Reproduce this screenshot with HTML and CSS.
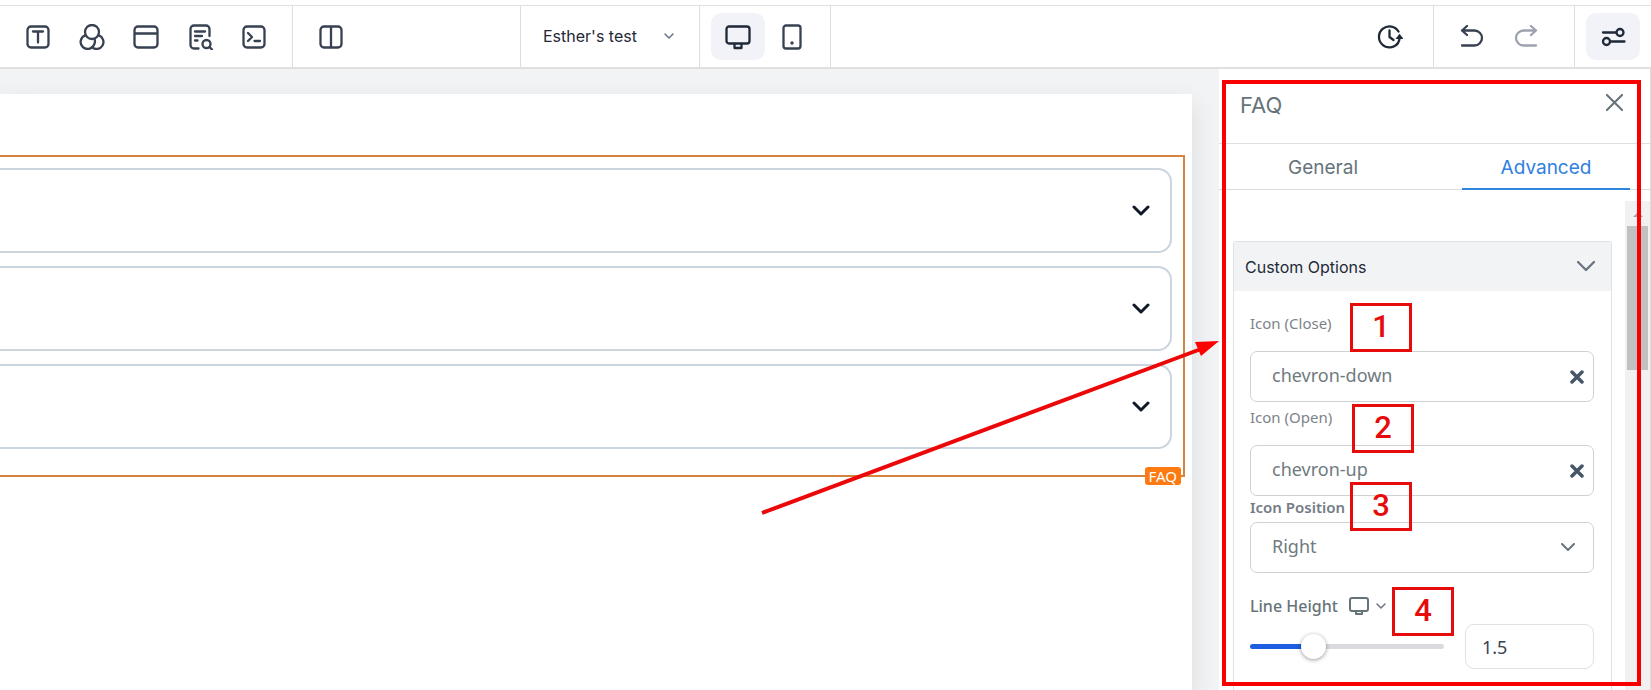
FILE: index.html
```html
<!DOCTYPE html>
<html lang="en">
<head>
    <meta charset="UTF-8">
    <meta name="viewport" content="width=device-width, initial-scale=1.0">
    <title>Page Editor - FAQ</title>
    <link rel="stylesheet" href="styles.css">
</head>
<body>
    <div class="app">
        <header class="toolbar">
            <div class="tool-group">
                <button type="button" class="tool-btn" aria-label="Text">
                    <svg class="icon" viewBox="0 0 24 24"><rect x="1.5" y="1.5" width="21" height="21" rx="3.5"/><path d="M7 6.5h10M12 6.5v11"/></svg>
                </button>
                <button type="button" class="tool-btn" aria-label="Elements">
                    <svg class="icon icon-wide" viewBox="0 0 26 26"><circle cx="13" cy="8" r="7"/><path d="M6.200 11.400a7 7 0 1 0 9 9q1.300-2.500.3-5.500"/><path d="M19.800 11.400a7 7 0 1 1-6.800 12"/></svg>
                </button>
                <button type="button" class="tool-btn" aria-label="Sections">
                    <svg class="icon icon-wide" viewBox="0 0 26 26"><rect x="1.500" y="2.500" width="23" height="21" rx="3.500"/><path d="M2 9.500h22"/></svg>
                </button>
                <button type="button" class="tool-btn" aria-label="Page content">
                    <svg class="icon icon-wide" viewBox="0 0 26 26"><path d="M11.500 24.500H7A3.500 3.500 0 0 1 3.500 21V5A3.500 3.500 0 0 1 7 1.500h12A3.500 3.500 0 0 1 22.500 5v7M8 7.500h10M8 12h7M8 16.500h2.500"/><circle cx="19.500" cy="20" r="4"/><path d="M22.500 23l2.500 2.500"/></svg>
                </button>
                <button type="button" class="tool-btn" aria-label="Code">
                    <svg class="icon" viewBox="0 0 24 24"><rect x="1.500" y="1.500" width="21" height="21" rx="3.500"/><path d="M6 8l4 4-4 4M12.500 16h5.500"/></svg>
                </button>
            </div>
            <div class="tool-group tool-group-layout">
                <button type="button" class="tool-btn" aria-label="Columns">
                    <svg class="icon" viewBox="0 0 24 24"><rect x="1.500" y="1.500" width="21" height="21" rx="3.500"/><path d="M12 2v20"/></svg>
                </button>
            </div>
            <div class="tool-group tool-group-page">
                <button type="button" class="page-btn">
                    <span>Esther's test</span>
                    <svg class="icon-caret" viewBox="0 0 10 6"><path d="M1 1l4 4 4-4"/></svg>
                </button>
            </div>
            <div class="tool-group">
                <button type="button" class="tool-btn active" aria-label="Desktop view">
                    <svg class="icon icon-wide" viewBox="0 0 26 26"><rect x="1.500" y="2.500" width="23" height="17" rx="2.500"/><path d="M9.500 20v4h7v-4"/></svg>
                </button>
                <button type="button" class="tool-btn" aria-label="Mobile view">
                    <svg class="icon icon-wide" viewBox="0 0 26 26"><rect x="4.500" y="1.500" width="17" height="23" rx="2.500"/><circle class="dot" cx="13" cy="19" r="1.700"/></svg>
                </button>
            </div>
            <div class="tool-group tool-group-history">
                <button type="button" class="tool-btn dark" aria-label="Version history">
                    <svg class="icon icon-wide" viewBox="0 0 26 26"><path d="M21 19A10.500 10.500 0 1 1 21.500 7.500M12.500 6.500v6.500l4 3"/><path d="M21 19q1.500-2.500 1.600-5"/><path class="dot" d="M18.500 15l4-5.200 4 5.200z"/></svg>
                </button>
            </div>
            <div class="tool-group tool-group-undo">
                <button type="button" class="tool-btn" aria-label="Undo">
                    <svg class="icon" viewBox="0 0 24 24"><path d="M7 1L2 5.500 7 10M2 5.500H14.500a7.500 7.500 0 0 1 0 15H2"/></svg>
                </button>
                <button type="button" class="tool-btn" aria-label="Redo" disabled>
                    <svg class="icon" viewBox="0 0 24 24"><path d="M17 1L22 5.500 17 10M22 5.500H9.500a7.500 7.500 0 0 0 0 15H22"/></svg>
                </button>
            </div>
            <div class="tool-group tool-group-last">
                <button type="button" class="tool-btn active" aria-label="Settings">
                    <svg class="icon icon-wide" viewBox="0 0 26 26"><circle cx="20" cy="8.500" r="3.500"/><path d="M3 8.500h13"/><circle cx="6.500" cy="17.500" r="3.500"/><path d="M10.500 17.500h14"/></svg>
                </button>
            </div>
        </header>

        <div class="workspace">
            <main class="canvas">
                <div class="page">
                    <section class="faq">
                        <div class="faq-item">
                            <svg class="faq-chevron" viewBox="0 0 18 11"><path d="M2 2l7 7 7-7"/></svg>
                        </div>
                        <div class="faq-item">
                            <svg class="faq-chevron" viewBox="0 0 18 11"><path d="M2 2l7 7 7-7"/></svg>
                        </div>
                        <div class="faq-item">
                            <svg class="faq-chevron" viewBox="0 0 18 11"><path d="M2 2l7 7 7-7"/></svg>
                        </div>
                        <span class="faq-tag">FAQ</span>
                    </section>
                </div>
            </main>

            <aside class="panel">
                <div class="panel-header">
                    <h2>FAQ</h2>
                    <button type="button" class="close-btn" aria-label="Close">
                        <svg viewBox="0 0 18 18"><path d="M1 1l16 16M17 1L1 17"/></svg>
                    </button>
                </div>
                <div class="tabs">
                    <button type="button" class="tab">General</button>
                    <button type="button" class="tab active">Advanced</button>
                </div>
                <div class="panel-body">
                    <div class="options">
                        <button type="button" class="options-header">
                            <span>Custom Options</span>
                            <svg class="options-chevron" viewBox="0 0 18 11"><path d="M1 1l8 8 8-8"/></svg>
                        </button>
                        <form class="options-content">
                            <label class="label-light label-first" for="icon-close">Icon (Close)</label>
                            <div class="field">
                                <input type="text" id="icon-close" value="chevron-down">
                                <button type="button" class="clear-btn" aria-label="Clear close icon">
                                    <svg viewBox="0 0 14 14"><path d="M2 2l10 10M12 2L2 12"/></svg>
                                </button>
                            </div>
                            <label class="label-light" for="icon-open">Icon (Open)</label>
                            <div class="field">
                                <input type="text" id="icon-open" value="chevron-up">
                                <button type="button" class="clear-btn" aria-label="Clear open icon">
                                    <svg viewBox="0 0 14 14"><path d="M2 2l10 10M12 2L2 12"/></svg>
                                </button>
                            </div>
                            <label class="label-bold" for="icon-position">Icon Position</label>
                            <div class="field">
                                <select id="icon-position">
                                    <option>Right</option>
                                    <option>Left</option>
                                </select>
                                <svg class="select-chevron" viewBox="0 0 14 9"><path d="M1 1l6 6 6-6"/></svg>
                            </div>
                            <div class="line-height-label">
                                <label for="line-height">Line Height</label>
                                <button type="button" class="device-btn" aria-label="Choose device">
                                    <svg class="device-icon" viewBox="0 0 20 19"><rect x="1" y="1" width="18" height="13" rx="2"/><path d="M7 14v3h6v-3"/></svg>
                                    <svg class="icon-caret" viewBox="0 0 10 6"><path d="M1 1l4 4 4-4"/></svg>
                                </button>
                            </div>
                            <div class="slider-row">
                                <input type="range" id="line-height" min="0" max="4" step="0.1" value="1.2">
                                <input type="text" class="number" aria-label="Line height value" value="1.5">
                            </div>
                        </form>
                    </div>
                    <div class="scrollbar">
                        <span class="scroll-arrow"></span>
                        <span class="scroll-thumb"></span>
                    </div>
                </div>

                <!-- Tutorial callouts -->
                <div class="callout-frame"></div>
                <span class="callout callout-1">1</span>
                <span class="callout callout-2">2</span>
                <span class="callout callout-3">3</span>
                <span class="callout callout-4">4</span>
                <svg class="callout-arrow" viewBox="0 0 460 176">
                    <path class="arrow-line" d="M3 173L442 9"/>
                    <path class="arrow-head" d="M460 1L436 2L442 16Z"/>
                </svg>
            </aside>
        </div>
    </div>
</body>
</html>
```
FILE: styles.css
```css
* {
    box-sizing: border-box;
}

body {
    margin: 0;
    background: #ffffff;
    font-family: Inter, "Liberation Sans", sans-serif;
    color: #1f2937;
}

button {
    padding: 0;
    border: none;
    background: transparent;
    font-family: inherit;
    color: inherit;
    cursor: pointer;
}

svg {
    display: block;
    fill: none;
    stroke: currentColor;
    stroke-linecap: round;
    stroke-linejoin: round;
}

.app {
    display: flex;
    flex-direction: column;
    height: 100vh;
    padding-top: 5px;
    overflow: hidden;
}

/* Toolbar */
.toolbar {
    display: flex;
    flex: none;
    height: 64px;
    border-top: 1px solid #e0e0e0;
    border-bottom: 2px solid #e0e0e0;
}

.tool-group {
    display: flex;
    align-items: center;
    padding: 0 11px;
    border-right: 1px solid #dedede;
}

.tool-group-layout {
    width: 228px;
}

.tool-group-page {
    padding: 0 25px 2px 22px;
}

.tool-group-history {
    margin-left: auto;
    padding-right: 16px;
}

.tool-group-undo {
    padding-right: 21px;
}

.tool-group-last {
    border-right: none;
}

.tool-btn {
    display: flex;
    align-items: center;
    justify-content: center;
    width: 54px;
    height: 47px;
    border-radius: 10px;
    color: #374151;
}

.tool-btn.active {
    background: #f2f3f8;
    color: #1f2937;
}

.tool-btn.dark {
    color: #1f2937;
}

.tool-btn:disabled {
    color: #9ca3af;
}

.icon {
    width: 24px;
    height: 24px;
    stroke-width: 2.3;
}

.icon-wide {
    width: 26px;
    height: 26px;
}

.dot {
    fill: currentColor;
    stroke: none;
}

.page-btn {
    display: flex;
    align-items: center;
    gap: 27px;
    font-size: 16px;
}

.icon-caret {
    width: 10px;
    height: 6px;
    stroke: #6b7280;
    stroke-width: 1.5;
    overflow: visible;
}

/* Canvas */
.workspace {
    display: flex;
    flex: 1;
    min-height: 0;
}

.canvas {
    flex: 1;
    padding: 25px 27px 0 0;
    background: #f2f3f5;
    overflow: hidden;
}

.page {
    height: 100%;
    padding: 61px 7px 0 0;
    background: #ffffff;
    box-shadow: 0 10px 25px rgba(0, 0, 0, 0.1);
}

.faq {
    display: flex;
    flex-direction: column;
    position: relative;
    gap: 13px;
    padding: 11px 11px 26px 0;
    border: 2px solid #d4843e;
    border-left: none;
}

.faq-item {
    display: flex;
    align-items: center;
    justify-content: flex-end;
    height: 85px;
    padding-right: 20px;
    border: 2px solid #cbd5de;
    border-left: none;
    border-radius: 0 14px 14px 0;
}

.faq-chevron {
    width: 18px;
    height: 11px;
    stroke: #111827;
    stroke-width: 3;
}

.faq-tag {
    position: absolute;
    right: 2px;
    bottom: -10px;
    padding: 0 4px;
    border-radius: 3px;
    background: #fb7a12;
    font: 15px/18px "Noto Sans", sans-serif;
    color: #ffffff;
}

/* Settings panel */
.panel {
    display: flex;
    flex-direction: column;
    position: relative;
    width: 432px;
    border-right: 1px solid #dddddd;
    background: #ffffff;
}

.panel-header {
    display: flex;
    justify-content: space-between;
    flex: none;
    height: 75px;
    padding: 22px 27px 0 21px;
    border-bottom: 1px solid #dddfe2;
    color: #667479;
}

.panel-header h2 {
    margin: 0;
    font-size: 22px;
    font-weight: 400;
    line-height: 28px;
}

.close-btn {
    align-self: flex-start;
}

.close-btn svg {
    width: 17px;
    height: 23px;
    stroke-width: 2.2;
}

.tabs {
    display: flex;
    justify-content: space-between;
    flex: none;
    height: 46px;
    padding: 0 20px;
    border-bottom: 1px solid #d9dbde;
}

.tab {
    width: 168px;
    height: 46px;
    padding-top: 2px;
    border-bottom: 2px solid transparent;
    font-size: 19px;
    color: #667479;
}

.tab.active {
    border-bottom-color: #2f86dd;
    color: #2f80e0;
}

.panel-body {
    display: flex;
    flex: 1;
    min-height: 0;
    gap: 13px;
    padding: 11px 0 0 14px;
}

.options {
    flex: 1;
    margin-top: 40px;
    border: 1px solid #e0e2e6;
    border-bottom: none;
    border-radius: 3px 3px 0 0;
}

.options-header {
    display: flex;
    align-items: center;
    justify-content: space-between;
    width: 100%;
    height: 49px;
    padding: 0 16px 0 11px;
    background: #f2f3f5;
    font-size: 16px;
    color: #1f2937;
}

.options-chevron {
    width: 18px;
    height: 11px;
    stroke: #6b7280;
    stroke-width: 2.3;
}

.options-content {
    display: flex;
    flex-direction: column;
    padding: 20px 17px 0 16px;
    font-family: "Noto Sans", sans-serif;
    color: #667479;
}

.label-light {
    height: 43px;
    padding-top: 3px;
    font-size: 15px;
    line-height: 24px;
    color: #7d838a;
}

.label-first {
    height: 40px;
    padding-top: 0;
}

.label-bold {
    height: 26px;
    font-size: 15px;
    font-weight: 600;
    line-height: 22px;
    color: #747c87;
}

.field {
    display: flex;
    align-items: center;
    height: 51px;
    padding-right: 9px;
    border: 1px solid #cfd2d5;
    border-radius: 7px;
}

.field input,
.field select {
    flex: 1;
    min-width: 0;
    height: 100%;
    padding: 0 0 3px 21px;
    border: none;
    outline: none;
    appearance: none;
    background: transparent;
    font-family: inherit;
    font-size: 18px;
    color: #6f7b80;
}

.clear-btn svg {
    width: 14px;
    height: 14px;
    stroke: #475569;
    stroke-width: 3.5;
}

.select-chevron {
    width: 14px;
    height: 9px;
    margin-right: 9px;
    stroke: #6b7280;
    stroke-width: 2;
}

.line-height-label {
    display: flex;
    align-items: center;
    gap: 11px;
    height: 24px;
    margin-top: 21px;
    font-size: 16px;
    font-weight: 500;
}

.device-btn {
    display: flex;
    align-items: center;
    gap: 7px;
}

.device-icon {
    width: 20px;
    height: 19px;
    stroke-width: 2;
}

.slider-row {
    display: flex;
    align-items: center;
    justify-content: space-between;
    margin-top: 6px;
}

.slider-row input[type="range"] {
    width: 194px;
    height: 25px;
    margin: 0;
    appearance: none;
    background: transparent;
}

.slider-row input[type="range"]::-webkit-slider-runnable-track {
    height: 5px;
    border-radius: 3px;
    background: linear-gradient(to right, #1d5fe0 32%, #dadadf 32%);
}

.slider-row input[type="range"]::-webkit-slider-thumb {
    width: 25px;
    height: 25px;
    margin-top: -10px;
    appearance: none;
    border-radius: 50%;
    background: #ffffff;
    box-shadow: 0 1px 4px rgba(0, 0, 0, 0.4);
}

.number {
    width: 129px;
    height: 45px;
    padding: 0 16px;
    border: 1px solid #e0e2e5;
    border-radius: 9px;
    font-family: inherit;
    font-size: 18px;
    color: #374151;
}

.scrollbar {
    display: flex;
    flex-direction: column;
    align-items: center;
    width: 25px;
    background: #f1f1f1;
}

.scroll-arrow {
    margin: 11px 0 9px;
    border: 5px solid transparent;
    border-top: none;
    border-bottom-color: #a3a3a3;
}

.scroll-thumb {
    width: 21px;
    height: 144px;
    background: #c1c1c1;
}

/* Callouts drawn over the panel */
.callout-frame {
    position: absolute;
    top: 11px;
    right: 9px;
    bottom: 4px;
    left: 3px;
    border: 4px solid #f80000;
    pointer-events: none;
}

.callout {
    position: absolute;
    width: 62px;
    height: 49px;
    border: 3px solid #e60c0c;
    font: 500 31px/41px Roboto, Arial, sans-serif;
    text-align: center;
    color: #e60c0c;
}

.callout-1 {
    top: 234px;
    left: 131px;
}

.callout-2 {
    top: 335px;
    left: 133px;
}

.callout-3 {
    top: 413px;
    left: 131px;
}

.callout-4 {
    top: 518px;
    left: 173px;
}

.callout-arrow {
    position: absolute;
    top: 271px;
    right: 431px;
    width: 460px;
    height: 176px;
    pointer-events: none;
}

.arrow-line {
    stroke: #ec0808;
    stroke-width: 4;
    stroke-linecap: butt;
}

.arrow-head {
    fill: #ff0000;
    stroke: none;
}
```
